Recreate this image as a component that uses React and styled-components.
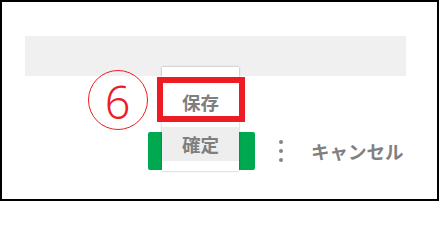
import React from "react";
import styled, { createGlobalStyle } from "styled-components";

const Global = createGlobalStyle`
  html, body { margin: 0; padding: 0; background: #ffffff; }
  body { font-family: "Noto Sans CJK JP", "Noto Sans", sans-serif; }
`;

const Frame = styled.div`
  position: relative;
  box-sizing: border-box;
  width: 439px;
  height: 201px;
  border: 2px solid #000000;
  padding: 34px 0 0 23px;
  background: #ffffff;
`;

const Bar = styled.div`
  width: 381px;
  height: 40px;
  background: #f0f0f0;
`;

const ActionRow = styled.div`
  display: flex;
  align-items: center;
  margin-top: 56px;
  padding-left: 123px;
`;

const PrimaryButton = styled.div`
  width: 107px;
  height: 38px;
  border-radius: 2px;
  background: #00a94f;
`;

const Kebab = styled.div`
  display: flex;
  flex-direction: column;
  align-items: center;
  gap: 4.5px;
  width: 24px;
  margin-left: 14px;
`;

const Dot = styled.span`
  width: 4.5px;
  height: 4.5px;
  border-radius: 50%;
  background: #858585;
`;

const CancelLabel = styled.span`
  margin-left: 18px;
  font-family: "Noto Sans CJK JP", sans-serif;
  font-weight: 700;
  font-size: 18.5px;
  line-height: 20px;
  color: #808080;
`;

const Menu = styled.div`
  position: absolute;
  left: 160px;
  top: 65px;
  width: 77px;
  padding: 10px 0;
  background: #ffffff;
  box-shadow: 0 0 2px rgba(0, 0, 0, 0.35);
  display: flex;
  flex-direction: column;
`;

const MenuItem = styled.div`
  height: ${(p) => p.$h}px;
  display: flex;
  align-items: center;
  justify-content: center;
  background: ${(p) => (p.$active ? "#eeeeee" : "#ffffff")};
  font-family: "Noto Sans CJK JP", sans-serif;
  font-weight: 700;
  font-size: 18.5px;
  color: #7f7f7f;
`;

const Highlight = styled.div`
  position: absolute;
  left: 155px;
  top: 75px;
  width: 88px;
  height: 45px;
  box-sizing: border-box;
  border: 6px solid #ed1c24;
`;

const StepBadge = styled.div`
  position: absolute;
  left: 85.5px;
  top: 68px;
  width: 60px;
  height: 60px;
  box-sizing: border-box;
  border: 1.6px solid #ed1c24;
  border-radius: 50%;
  display: flex;
  align-items: center;
  justify-content: center;
  padding-top: 3px;
  font-family: "Noto Sans", sans-serif;
  font-weight: 300;
  font-size: 45px;
  line-height: 1;
  color: #ed1c24;
`;

export default function App() {
  return (
    <>
      <Global />
      <Frame>
        <Bar />
        <ActionRow>
          <PrimaryButton />
          <Kebab>
            <Dot />
            <Dot />
            <Dot />
          </Kebab>
          <CancelLabel>キャンセル</CancelLabel>
        </ActionRow>
        <Menu>
          <MenuItem $h={50}>保存</MenuItem>
          <MenuItem $h={34} $active>確定</MenuItem>
        </Menu>
        <Highlight />
        <StepBadge>6</StepBadge>
      </Frame>
    </>
  );
}
